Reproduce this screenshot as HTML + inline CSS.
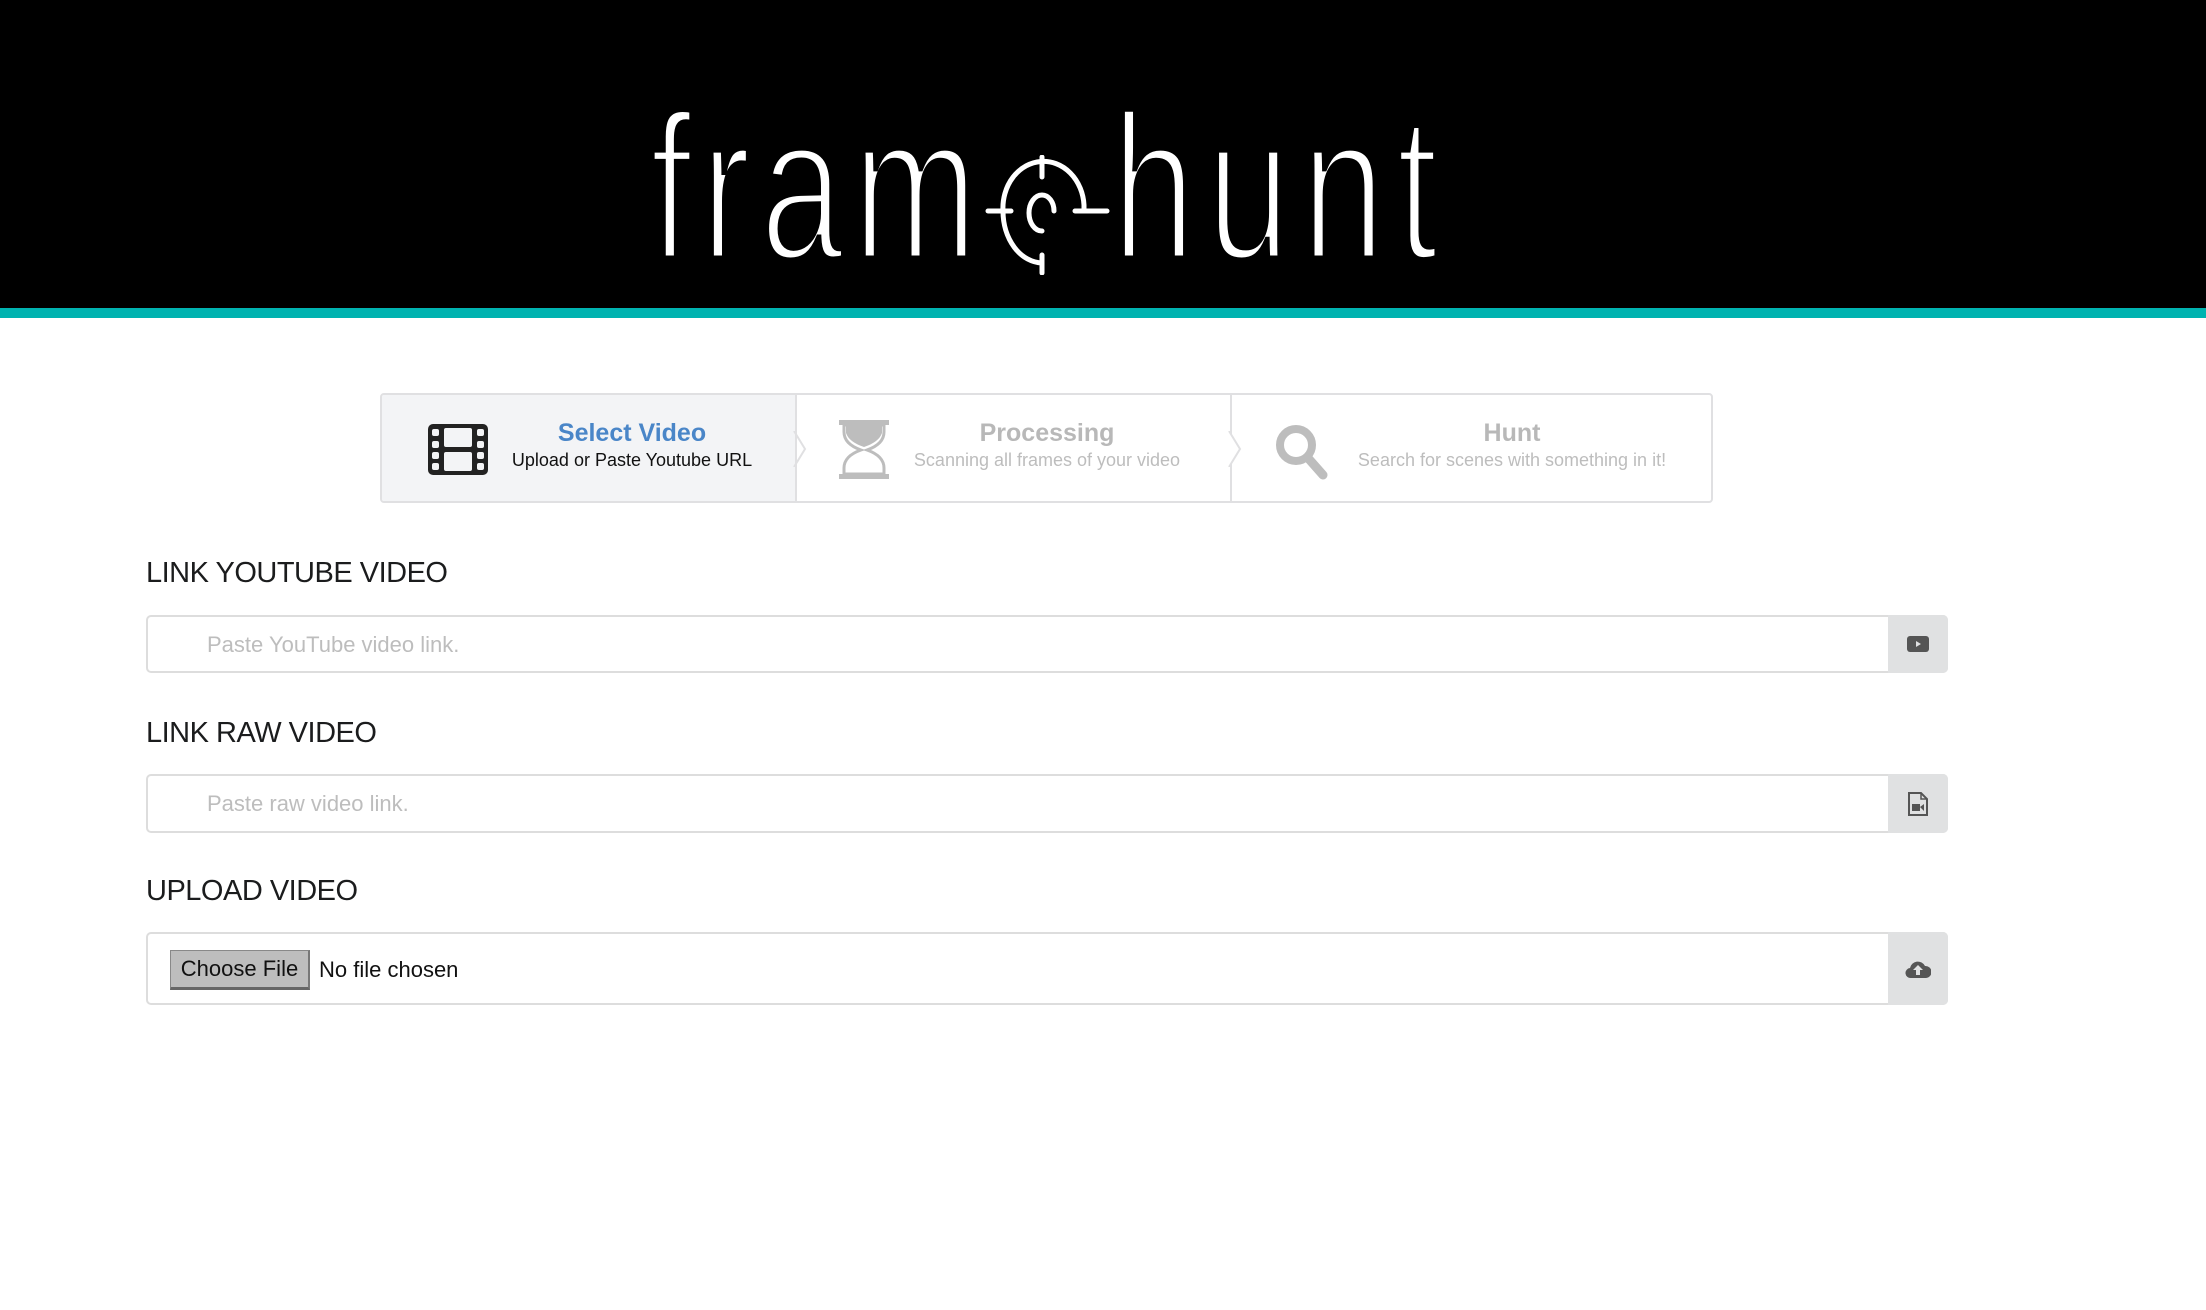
<!DOCTYPE html>
<html><head><meta charset="utf-8">
<style>
*{box-sizing:border-box;margin:0;padding:0}
body{width:2206px;height:1310px;background:#fff;font-family:"Liberation Sans",sans-serif;position:relative;overflow:hidden}
.hdr{position:absolute;left:0;top:0;width:2206px;height:308px;background:#000}
.teal{position:absolute;left:0;top:308px;width:2206px;height:10px;background:#00b3b0}
.logo{position:absolute;top:84px;color:#fff;font-size:208px;line-height:1;-webkit-text-stroke:7px #000;font-family:"Liberation Sans",sans-serif;transform:scaleX(0.72);transform-origin:0 0;white-space:nowrap}
.steps{position:absolute;left:380px;top:393px;width:1333px;height:110px;border:2px solid #e0e0e2;border-radius:4px;overflow:hidden;background:#fff}
.cell{position:absolute;top:0;height:106px}
.t{position:absolute;text-align:center;white-space:nowrap}
.tt{font-size:25px;font-weight:bold;top:24px}
.ts{font-size:18px;top:55px}
.lbl{position:absolute;left:146px;font-size:29px;color:#1b1c1d;letter-spacing:-0.5px}
.inp{position:absolute;left:146px;width:1802px;border:2px solid #ddd;border-radius:5px;background:#fff}
.add{position:absolute;right:-2px;top:-2px;bottom:-2px;width:60px;background:#e0e1e2;border-radius:0 5px 5px 0;display:flex;align-items:center;justify-content:center}
.ph{position:absolute;left:59px;font-size:22px;color:#bdbdbd}
</style></head><body>
<div class="hdr"></div>
<div class="teal"></div>
<div class="logo" style="left:650px;letter-spacing:13px">fram</div>
<svg style="position:absolute;left:985px;top:155px" width="125" height="120" viewBox="0 0 125 120">
<g fill="none" stroke="#fff" stroke-width="5" stroke-linecap="round">
<path d="M18 56 A40 46 0 0 1 99 50 L99 56"/>
<path d="M18 56 A40 52 0 0 0 57 108"/>
<path d="M57 76 A13 18 0 0 1 57 40 A12 16 0 0 1 69 56"/>
<line x1="57" y1="2" x2="57" y2="22"/>
<line x1="57" y1="100" x2="57" y2="118"/>
<line x1="3" y1="56" x2="26" y2="56"/>
<line x1="90" y1="56" x2="122" y2="56"/>
</g></svg>
<div class="logo" style="left:1112px;letter-spacing:16px">hunt</div>

<div class="steps">
 <div class="cell" style="left:0;width:415px;background:#f3f4f6;border-right:2px solid #e0e0e2"></div>
 <div class="cell" style="left:415px;width:435px;border-right:2px solid #e0e0e2"></div>
 <svg style="position:absolute;left:410px;top:36px" width="16" height="36"><path d="M0 2 L0 34" stroke="#f3f4f6" stroke-width="6"/><path d="M2 0 L13 18 L2 36" fill="none" stroke="#e0e0e2" stroke-width="2"/></svg>
 <svg style="position:absolute;left:845px;top:36px" width="16" height="36"><path d="M0 2 L0 34" stroke="#fff" stroke-width="6"/><path d="M2 0 L13 18 L2 36" fill="#fff" stroke="#e0e0e2" stroke-width="2"/></svg>
 <svg style="position:absolute;left:46px;top:29px" width="60" height="51" viewBox="0 0 60 51">
  <rect x="0" y="0" width="60" height="51" rx="5" fill="#222"/>
  <g fill="#f3f4f6">
   <rect x="16" y="4" width="28" height="19" rx="2"/><rect x="16" y="28" width="28" height="19" rx="2"/>
   <rect x="4" y="5" width="7" height="7" rx="2"/><rect x="4" y="17" width="7" height="7" rx="2"/><rect x="4" y="28" width="7" height="7" rx="2"/><rect x="4" y="39" width="7" height="7" rx="2"/>
   <rect x="49" y="5" width="7" height="7" rx="2"/><rect x="49" y="17" width="7" height="7" rx="2"/><rect x="49" y="28" width="7" height="7" rx="2"/><rect x="49" y="39" width="7" height="7" rx="2"/>
  </g></svg>
 <div class="t tt" style="left:120px;width:260px;color:#4a86c8">Select Video</div>
 <div class="t ts" style="left:120px;width:260px;color:#111">Upload or Paste Youtube URL</div>
 <svg style="position:absolute;left:457px;top:25px" width="50" height="60" viewBox="0 0 50 60">
  <g fill="#bdbdbd"><rect x="0" y="0" width="50" height="5"/><rect x="0" y="54" width="50" height="5"/>
  <path d="M5 5 L45 5 L45 12 Q45 24 28 30 Q45 36 45 48 L45 54 L5 54 L5 48 Q5 36 22 30 Q5 24 5 12 Z" fill="none" stroke="#bdbdbd" stroke-width="3"/>
  <path d="M7 6 L43 6 L43 13 Q40 22 25 27 Q10 22 7 13 Z"/></g></svg>
 <div class="t tt" style="left:525px;width:280px;color:#b8b8b8">Processing</div>
 <div class="t ts" style="left:525px;width:280px;color:#bdbdbd">Scanning all frames of your video</div>
 <svg style="position:absolute;left:893px;top:29px" width="54" height="56" viewBox="0 0 54 56">
  <circle cx="21" cy="21" r="16" fill="none" stroke="#bdbdbd" stroke-width="8"/>
  <line x1="33" y1="34" x2="48" y2="51" stroke="#bdbdbd" stroke-width="9" stroke-linecap="round"/></svg>
 <div class="t tt" style="left:970px;width:320px;color:#b8b8b8">Hunt</div>
 <div class="t ts" style="left:970px;width:320px;color:#bdbdbd">Search for scenes with something in it!</div>
</div>

<div class="lbl" style="top:557px">LINK YOUTUBE VIDEO</div>
<div class="inp" style="top:615px;height:58px"><div class="ph" style="top:15px">Paste YouTube video link.</div>
 <div class="add"><svg width="22" height="16"><rect width="22" height="16" rx="3" fill="#555"/><path d="M9 5 L14 8 L9 11Z" fill="#e0e1e2"/></svg></div></div>

<div class="lbl" style="top:717px">LINK RAW VIDEO</div>
<div class="inp" style="top:774px;height:59px"><div class="ph" style="top:15px">Paste raw video link.</div>
 <div class="add"><svg width="20" height="24" viewBox="0 0 20 24"><path d="M1 1 H13 L19 7 V23 H1 Z" fill="none" stroke="#555" stroke-width="2"/><path d="M13 1 V7 H19" fill="none" stroke="#555" stroke-width="1.5"/><rect x="4" y="12" width="8" height="7" fill="#555"/><path d="M12 15 L16 12 V19Z" fill="#555"/></svg></div></div>

<div class="lbl" style="top:875px">UPLOAD VIDEO</div>
<div class="inp" style="top:932px;height:73px">
 <div style="position:absolute;left:22px;top:16px;width:140px;height:40px;background:#bdbdbd;border:1px solid #888;border-bottom:3px solid #666;border-right:2px solid #777;font-size:22px;color:#111;text-align:center;line-height:36px">Choose File</div>
 <div style="position:absolute;left:171px;top:23px;font-size:22px;color:#111">No file chosen</div>
 <div class="add"><svg width="26" height="20" viewBox="0 0 26 20"><path d="M6 19 A5 5 0 0 1 5 9 A8 8 0 0 1 20 7 A6 6 0 0 1 21 19 Z" fill="#555"/><path d="M13 6 L8 11 H11 V16 H15 V11 H18Z" fill="#e0e1e2"/></svg></div></div>
</body></html>
